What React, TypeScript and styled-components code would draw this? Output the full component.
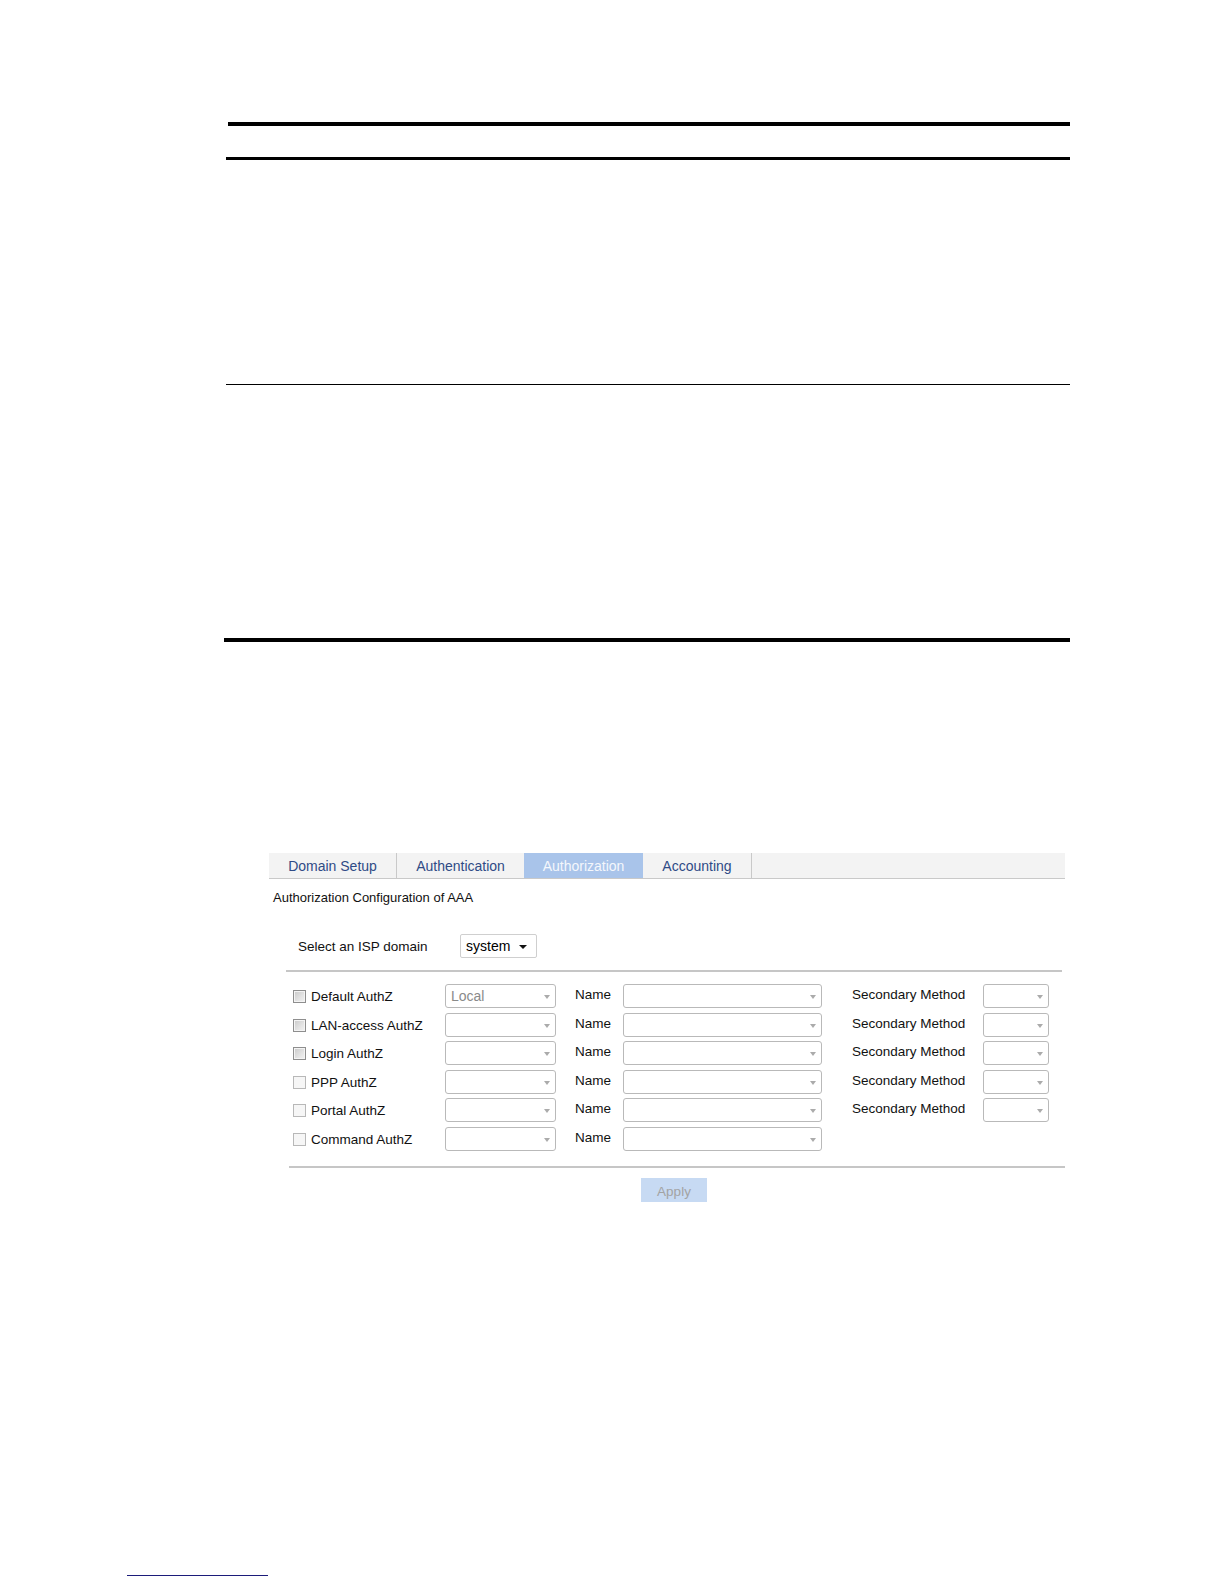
import * as React from 'react';
import styled, { createGlobalStyle } from 'styled-components';

const GlobalStyle = createGlobalStyle`
  html, body {
    margin: 0;
    padding: 0;
    background: #ffffff;
    overflow: hidden;
  }
  body {
    font-family: "Liberation Sans", Arial, sans-serif;
    color: #111;
  }
`;

const Page = styled.div`
  width: 100%;
  height: 100vh;
  max-height: 1584px;
  display: flex;
  flex-direction: column;
  overflow: hidden;
`;

const Rule = styled.div<{ $top: number; $height: number; $left?: number; $width?: number }>`
  flex: none;
  margin-top: ${({ $top }) => $top}px;
  margin-left: ${({ $left = 226 }) => $left}px;
  width: ${({ $width = 844 }) => $width}px;
  height: ${({ $height }) => $height}px;
  background: #000;
`;

const Panel = styled.div`
  flex: none;
  margin-top: 211px;
  margin-left: 269px;
  width: 796px;
  display: flex;
  flex-direction: column;
`;

const TabBar = styled.div`
  display: flex;
  height: 25px;
  background: #f3f3f3;
  border-bottom: 1px solid #c9c9c9;
`;

const Tab = styled.div<{ $width: number; $active?: boolean; $sep?: boolean }>`
  width: ${({ $width }) => $width}px;
  display: flex;
  align-items: center;
  justify-content: center;
  font-size: 14px;
  color: ${({ $active }) => ($active ? '#f4f7fc' : '#2f4b86')};
  background: ${({ $active }) => ($active ? '#a9c4ea' : 'transparent')};
  border-right: ${({ $sep }) => ($sep ? '1px solid #c9c9c9' : 'none')};
  padding-top: 1px;
`;

const Title = styled.div`
  margin-top: 11px;
  margin-left: 4px;
  font-size: 13px;
  line-height: 16px;
`;

const DomainRow = styled.div`
  margin-top: 28px;
  padding-left: 29px;
  display: flex;
  align-items: center;
  height: 24px;
`;

const DomainLabel = styled.span`
  width: 162px;
  font-size: 13.5px;
`;

const DomainSelect = styled.div`
  width: 77px;
  height: 24px;
  box-sizing: border-box;
  border: 1px solid #cfcfcf;
  border-radius: 2px;
  display: flex;
  align-items: center;
  justify-content: space-between;
  padding: 0 9px 0 5px;
  font-size: 14px;
  color: #000;
`;

const Caret = styled.span<{ $dark?: boolean }>`
  width: 0;
  height: 0;
  border-left: ${({ $dark }) => ($dark ? 4 : 3.5)}px solid transparent;
  border-right: ${({ $dark }) => ($dark ? 4 : 3.5)}px solid transparent;
  border-top: 4px solid ${({ $dark }) => ($dark ? '#111' : '#ababab')};
  margin-top: 2px;
`;

const Divider = styled.div<{ $top: number; $left: number }>`
  margin-top: ${({ $top }) => $top}px;
  margin-left: ${({ $left }) => $left}px;
  width: 776px;
  height: 2px;
  background: #c6c6c6;
`;

const Grid = styled.div`
  margin-top: 12px;
  padding-left: 24px;
  display: grid;
  grid-template-columns: 152px 111px 67px 199px 161px 66px;
  grid-auto-rows: 24px;
  row-gap: 4.6px;
  align-items: center;
`;

const CheckCell = styled.label`
  display: flex;
  align-items: center;
  gap: 5px;
  font-size: 13.5px;
  padding-top: 1px;
`;

const Box = styled.span<{ $shaded?: boolean }>`
  width: 13px;
  height: 13px;
  box-sizing: border-box;
  border: 1px solid ${({ $shaded }) => ($shaded ? '#8e8e8e' : '#b8b8b8')};
  background: ${({ $shaded }) =>
    $shaded
      ? 'linear-gradient(135deg, #c9c9c9 0%, #e4e4e4 60%, #f2f2f2 100%)'
      : '#f6f6f6'};
  box-shadow: ${({ $shaded }) => ($shaded ? 'inset 0 0 0 1px #f4f4f4' : 'none')};
`;

const FieldSelect = styled.div`
  height: 24px;
  box-sizing: border-box;
  border: 1px solid #b9b9b9;
  border-radius: 3px;
  display: flex;
  align-items: center;
  justify-content: space-between;
  padding: 0 5px 0 5px;
  font-size: 14px;
  color: #8a8a8a;
  background: #fff;
`;

const FieldLabel = styled.span<{ $pad: number }>`
  padding-left: ${({ $pad }) => $pad}px;
  font-size: 13.5px;
  margin-bottom: 3px;
`;

const ApplyButton = styled.div`
  margin-top: 10px;
  margin-left: 372px;
  width: 66px;
  height: 24px;
  background: #c7daf3;
  color: #a3a3a3;
  font-size: 13.5px;
  display: flex;
  align-items: center;
  justify-content: center;
  padding-top: 3px;
  box-sizing: border-box;
`;

const FootLine = styled.div`
  flex: none;
  margin-top: auto;
  margin-bottom: 8px;
  margin-left: 127px;
  width: 141px;
  height: 1px;
  background: #1c1c7a;
`;

interface IAuthRow {
  label: string;
  shaded: boolean;
  value?: string;
  secondary: boolean;
}

const rows: IAuthRow[] = [
  { label: 'Default AuthZ', shaded: true, value: 'Local', secondary: true },
  { label: 'LAN-access AuthZ', shaded: true, secondary: true },
  { label: 'Login AuthZ', shaded: true, secondary: true },
  { label: 'PPP AuthZ', shaded: false, secondary: true },
  { label: 'Portal AuthZ', shaded: false, secondary: true },
  { label: 'Command AuthZ', shaded: false, secondary: false },
];

const tabs = [
  { name: 'Domain Setup', width: 127, sep: true },
  { name: 'Authentication', width: 127, sep: false },
  { name: 'Authorization', width: 119, active: true },
  { name: 'Accounting', width: 108, sep: true },
];

const AuthRow: React.FC<IAuthRow> = ({ label, shaded, value, secondary }) => (
  <>
    <CheckCell>
      <Box $shaded={shaded} />
      {label}
    </CheckCell>
    <FieldSelect>
      <span>{value}</span>
      <Caret />
    </FieldSelect>
    <FieldLabel $pad={19}>Name</FieldLabel>
    <FieldSelect>
      <span />
      <Caret />
    </FieldSelect>
    {secondary ? <FieldLabel $pad={30}>Secondary Method</FieldLabel> : <span />}
    {secondary ? (
      <FieldSelect>
        <span />
        <Caret />
      </FieldSelect>
    ) : (
      <span />
    )}
  </>
);

export default function App() {
  return (
    <Page>
      <GlobalStyle />
      <Rule $top={122} $height={4} $left={228} $width={842} />
      <Rule $top={31} $height={3} $left={226} />
      <Rule $top={224} $height={1} $left={226} />
      <Rule $top={253} $height={4} $left={224} $width={846} />

      <Panel>
        <TabBar>
          {tabs.map((t) => (
            <Tab key={t.name} $width={t.width} $active={t.active} $sep={t.sep}>
              {t.name}
            </Tab>
          ))}
        </TabBar>
        <Title>Authorization Configuration of AAA</Title>
        <DomainRow>
          <DomainLabel>Select an ISP domain</DomainLabel>
          <DomainSelect>
            <span>system</span>
            <Caret $dark />
          </DomainSelect>
        </DomainRow>
        <Divider $top={12} $left={17} />
        <Grid>
          {rows.map((r) => (
            <AuthRow key={r.label} {...r} />
          ))}
        </Grid>
        <Divider $top={15} $left={20} />
        <ApplyButton>Apply</ApplyButton>
      </Panel>

      <FootLine />
    </Page>
  );
}
